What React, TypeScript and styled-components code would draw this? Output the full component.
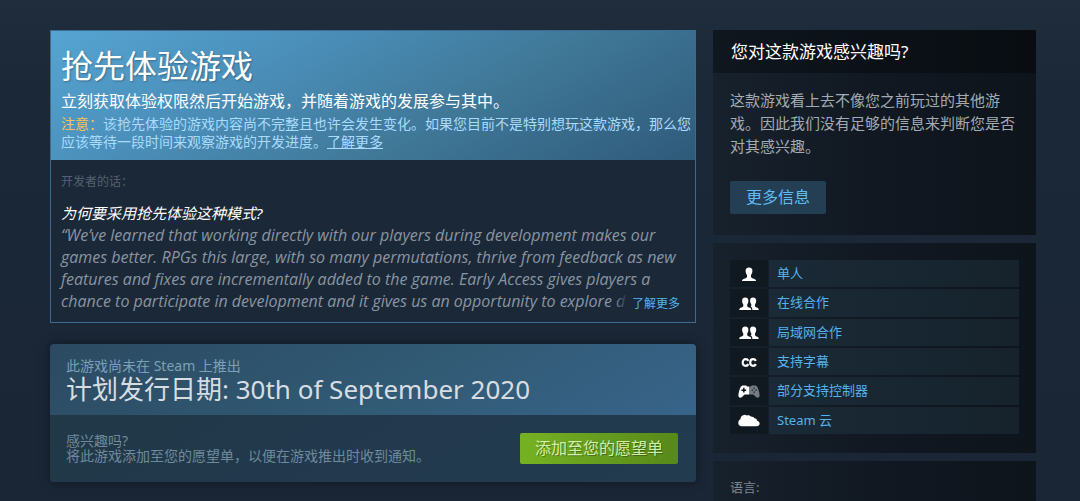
import React from "react";
import styled, { createGlobalStyle } from "styled-components";

const Global = createGlobalStyle`
  * { box-sizing: border-box; }
  html { background: #1b2838; }
  body {
    margin: 0;
    background: linear-gradient(180deg, #202d3d 0, #1b2838 90px, #1a2636 100%);
    color: #c6d4df;
    font-family: "Noto Sans", "Noto Sans CJK SC", sans-serif;
    font-size: 14px;
  }
  h1, h2, h3, p, ul { margin: 0; padding: 0; font-weight: 400; }
  button { font-family: inherit; border: 0; cursor: pointer; }
`;

const Page = styled.main`
  display: grid;
  grid-template-columns: minmax(0, 2fr) minmax(0, 1fr);
  gap: 17px;
  align-items: start;
  padding: 30px 44px 0 50px;
  height: 100vh;
  overflow: hidden;
`;

const Column = styled.div<{ $gap: number }>`
  display: flex;
  flex-direction: column;
  gap: ${(p) => p.$gap}px;
`;

const EarlyAccess = styled.section`
  border: 1px solid #3d6a92;
  background: #1b2838;
`;

const EarlyHeader = styled.header`
  padding: 12px 0 9px 10px;
  background: linear-gradient(150deg, #56a4d2 0%, #4b90bb 30%, #407898 62%, #2f5a7a 100%);
`;

const EarlyTitle = styled.h1`
  font-size: 32px;
  line-height: 46px;
  color: #fff;
  text-shadow: 1px 1px 2px rgba(0, 0, 0, 0.3);
`;

const EarlyLead = styled.h2`
  font-size: 16px;
  line-height: 24px;
  color: #fff;
`;

const EarlyNote = styled.p`
  margin-top: 2px;
  font-size: 14px;
  line-height: 18px;
  color: #a9dbff;
`;

const Warning = styled.span`
  color: #ffc24a;
`;

const NoteLink = styled.a`
  color: inherit;
  text-decoration: underline;
`;

const DevBody = styled.div`
  position: relative;
  padding: 13px 10px 10px;
`;

const DevLabel = styled.p`
  font-size: 12px;
  line-height: 18px;
  color: #56616c;
`;

const Question = styled.h3`
  margin-top: 11px;
  font-size: 15px;
  line-height: 22px;
  font-style: italic;
  color: #fff;
`;

const Quote = styled.p`
  font-family: "Open Sans", "Noto Sans CJK SC", sans-serif;
  font-size: 16px;
  line-height: 22px;
  font-style: italic;
  color: #8a95a1;
`;

const ReadMore = styled.a`
  position: absolute;
  right: 0;
  bottom: 8px;
  padding: 0 15px 0 18px;
  font-size: 12px;
  line-height: 20px;
  color: #56b4f0;
  text-decoration: none;
  background: linear-gradient(90deg, rgba(27, 40, 56, 0), #1b2838 14px);
`;

const Release = styled.section`
  border-radius: 4px;
  overflow: hidden;
  box-shadow: 0 0 12px rgba(0, 0, 0, 0.4);
`;

const ReleaseTop = styled.div`
  padding: 13px 16px 11px;
  background: linear-gradient(150deg, #2b4a61 0%, #315a74 55%, #38648a 100%);
`;

const ReleaseSmall = styled.p`
  font-size: 14px;
  line-height: 18px;
  color: #7ba0b9;
`;

const ReleaseDate = styled.h2`
  font-size: 26px;
  line-height: 29px;
  color: #d8dde2;
`;

const ReleaseBottom = styled.div`
  display: flex;
  align-items: flex-start;
  justify-content: space-between;
  padding: 18px 18px 18px 16px;
  background: linear-gradient(150deg, #213847 0%, #22394e 50%, #223b4e 100%);
`;

const Hint = styled.p`
  font-size: 14px;
  line-height: 15px;
  color: #6f8a9b;
`;

const WishButton = styled.button`
  height: 31px;
  padding: 0 15px;
  border-radius: 2px;
  background: linear-gradient(90deg, #75b022 5%, #588a1b 95%);
  color: #d2efa9;
  font-size: 16px;
  line-height: 31px;
  text-shadow: 1px 1px 0 rgba(0, 0, 0, 0.3);
`;

const Panel = styled.section`
  background: linear-gradient(90deg, #17212c 0%, #111822 50%, #0d141b 100%);
`;

const PanelTitle = styled.h2`
  padding: 0 18px;
  font-size: 17px;
  line-height: 43px;
  color: #fff;
  background: rgba(0, 0, 0, 0.3);
`;

const PanelBody = styled.div`
  padding: 16px 17px 21px;
`;

const Reason = styled.p`
  font-size: 15px;
  line-height: 23px;
  color: #a3abb3;
`;

const InfoButton = styled.button`
  display: block;
  margin-top: 23px;
  height: 33px;
  padding: 0 16px;
  border-radius: 2px;
  background: #243f53;
  color: #5fbdf5;
  font-size: 16px;
  line-height: 33px;
`;

const Features = styled.ul`
  display: flex;
  flex-direction: column;
  gap: 2px;
  min-height: 210px;
  padding: 17px 17px 19px;
  list-style: none;
`;

const Feature = styled.li`
  flex: 1;
  display: flex;
`;

const FeatureLink = styled.a`
  flex: 1;
  display: grid;
  grid-template-columns: 38px 1fr;
  gap: 1px;
  color: #56b2ec;
  font-size: 13px;
  line-height: 26px;
  text-decoration: none;
`;

const IconCell = styled.span`
  display: flex;
  align-items: center;
  justify-content: center;
  background: #101820;
`;

const FeatureName = styled.span`
  padding-left: 8px;
  background: linear-gradient(90deg, #1a2a36, #16232d);
`;

const LanguageTable = styled.table`
  width: 100%;
  table-layout: fixed;
  border-collapse: collapse;
  font-size: 13px;
  line-height: 20px;
  color: #8b949e;
`;

const HeadCell = styled.th`
  width: 22%;
  padding: 0;
  font-weight: 400;
  text-align: center;
`;

const NameCell = styled.td`
  padding: 0;
`;

const LanguageBody = styled.div`
  padding: 16px 17px 20px;
`;

const LanguageTitle = styled.p`
  font-size: 13px;
  line-height: 20px;
  color: #7d868f;
`;

const Icon = styled.svg`
  display: block;
  width: 24px;
  height: 18px;
  fill: #fff;
`;

const Single = () => (
  <Icon viewBox="0 0 24 18" aria-hidden="true">
    <path d="M12 2.500C14.400 2.500 15.500 4 15.400 6C15.300 7.800 14.800 9 14 10V11.700C14.200 12.900 15.600 13.200 17 13.700C18.400 14.200 19 14.800 19 16H5C5 14.800 5.600 14.200 7 13.700C8.400 13.200 9.800 12.900 10 11.700V10C9.200 9 8.700 7.800 8.600 6C8.500 4 9.600 2.500 12 2.500Z" />
  </Icon>
);

const Pair = () => (
  <Icon viewBox="0 0 24 18" aria-hidden="true">
    <path d="M16 3.500C18.300 3.500 19.300 4.900 19.200 6.900C19.100 8.500 18.600 9.600 18 10.400V12C18.200 13 19.300 13.300 20.300 13.800C21.300 14.200 21.700 14.800 21.700 16H15.400C15.300 14.200 14.900 13.300 13.500 12.600C14.100 12.400 14.300 12.100 14.300 11.700V10.400C13.700 9.600 13.200 8.500 13.100 6.900C13 4.900 13.800 3.500 16 3.500Z" />
    <path d="M8.200 3.500C10.500 3.500 11.500 4.900 11.400 6.900C11.300 8.500 10.800 9.600 10.200 10.400V12C10.400 13 11.600 13.300 12.700 13.800C13.900 14.200 14.300 14.800 14.300 16H2.300C2.300 14.800 2.700 14.200 3.800 13.800C4.900 13.300 6.100 13 6.300 12V10.400C5.700 9.600 5.200 8.500 5.100 6.900C5 4.900 6 3.500 8.200 3.500Z" />
  </Icon>
);

const Captions = () => (
  <Icon viewBox="0 0 24 18" aria-hidden="true">
    <g fill="none" stroke="#fff" strokeWidth="2.200">
      <path d="M11.400 7.900C10.800 6.800 9.800 6.200 8.700 6.200C6.900 6.200 5.700 7.600 5.700 9.500C5.700 11.400 6.900 12.800 8.700 12.800C9.800 12.800 10.800 12.200 11.400 11.100" />
      <path d="M18.900 7.900C18.300 6.800 17.300 6.200 16.200 6.200C14.400 6.200 13.200 7.600 13.200 9.500C13.200 11.400 14.400 12.800 16.200 12.800C17.300 12.800 18.300 12.200 18.900 11.100" />
    </g>
  </Icon>
);

const Gamepad = () => (
  <Icon viewBox="0 0 24 18" aria-hidden="true">
    <path
      fillRule="evenodd"
      d="M12 4.500H10L9.300 3.500H5.400L3.700 4.700C2.500 7.200 1.700 10 1.400 13C1.200 15.900 3.600 16.400 5 14.900L7.600 12.600H12ZM6 5.800H7.600V7.400H9.200V9H7.600V10.600H6V9H4.400V7.400H6Z"
    />
    <path
      fill="#777c82"
      fillRule="evenodd"
      d="M12 4.500H14L14.700 3.500H18.600L20.300 4.700C21.500 7.200 22.300 10 22.600 13C22.800 15.900 20.400 16.400 19 14.900L16.400 12.600H12ZM16.500 5.500V6.800H17.800V5.500ZM14.600 7.500V8.800H15.900V7.500ZM18.400 7.500V8.800H19.700V7.500ZM16.500 9.500V10.800H17.800V9.500Z"
    />
  </Icon>
);

const Cloud = () => (
  <Icon viewBox="0 0 24 18" aria-hidden="true">
    <path d="M4.500 15.200C2.500 15.200 1.300 13.700 1.300 12C1.300 10.300 2 8.800 3.400 8.200C3.600 5.400 5.200 4.600 6.300 4.300C7.300 3.200 8.800 3.600 9.500 4.400C11.500 4 13 4.700 13.900 5.500C15.700 5.500 16.900 6.200 17.500 7.300C19 7.500 19.900 8.300 20.300 9.700C22 10.200 22.700 11.400 22.600 12.700C22.500 14.300 21.400 15.200 20 15.200Z" />
  </Icon>
);

const features = [
  { name: "单人", icon: <Single /> },
  { name: "在线合作", icon: <Pair /> },
  { name: "局域网合作", icon: <Pair /> },
  { name: "支持字幕", icon: <Captions /> },
  { name: "部分支持控制器", icon: <Gamepad /> },
  { name: "Steam 云", icon: <Cloud /> },
];

export default function App() {
  return (
    <>
      <Global />
      <Page lang="zh-CN">
        <Column $gap={21}>
          <EarlyAccess>
            <EarlyHeader>
              <EarlyTitle>抢先体验游戏</EarlyTitle>
              <EarlyLead>立刻获取体验权限然后开始游戏，并随着游戏的发展参与其中。</EarlyLead>
              <EarlyNote>
                <Warning>注意：</Warning>
                该抢先体验的游戏内容尚不完整且也许会发生变化。如果您目前不是特别想玩这款游戏，那么您应该等待一段时间来观察游戏的开发进度。
                <NoteLink href="#early-access">了解更多</NoteLink>
              </EarlyNote>
            </EarlyHeader>
            <DevBody>
              <DevLabel>开发者的话：</DevLabel>
              <Question>为何要采用抢先体验这种模式?</Question>
              <Quote>
                “We’ve learned that working directly with our players during development makes our
                games better. RPGs this large, with so many permutations, thrive from feedback as new
                features and fixes are incrementally added to the game. Early Access gives players a
                chance to participate in development and it gives us an opportunity to explore d
              </Quote>
              <ReadMore href="#more">了解更多</ReadMore>
            </DevBody>
          </EarlyAccess>
          <Release>
            <ReleaseTop>
              <ReleaseSmall>此游戏尚未在 Steam 上推出</ReleaseSmall>
              <ReleaseDate>计划发行日期: 30th of September 2020</ReleaseDate>
            </ReleaseTop>
            <ReleaseBottom>
              <Hint>
                感兴趣吗?
                <br />
                将此游戏添加至您的愿望单，以便在游戏推出时收到通知。
              </Hint>
              <WishButton type="button">添加至您的愿望单</WishButton>
            </ReleaseBottom>
          </Release>
        </Column>
        <Column $gap={8}>
          <Panel>
            <PanelTitle>您对这款游戏感兴趣吗?</PanelTitle>
            <PanelBody>
              <Reason>
                这款游戏看上去不像您之前玩过的其他游戏。因此我们没有足够的信息来判断您是否对其感兴趣。
              </Reason>
              <InfoButton type="button">更多信息</InfoButton>
            </PanelBody>
          </Panel>
          <Panel>
            <Features>
              {features.map((f) => (
                <Feature key={f.name}>
                  <FeatureLink href="#feature">
                    <IconCell>{f.icon}</IconCell>
                    <FeatureName>{f.name}</FeatureName>
                  </FeatureLink>
                </Feature>
              ))}
            </Features>
          </Panel>
          <Panel>
            <LanguageBody>
              <LanguageTitle>语言:</LanguageTitle>
              <LanguageTable>
                <thead>
                  <tr>
                    <NameCell />
                    <HeadCell scope="col">界面</HeadCell>
                    <HeadCell scope="col">完全音频</HeadCell>
                    <HeadCell scope="col">字幕</HeadCell>
                  </tr>
                </thead>
              </LanguageTable>
            </LanguageBody>
          </Panel>
        </Column>
      </Page>
    </>
  );
}
